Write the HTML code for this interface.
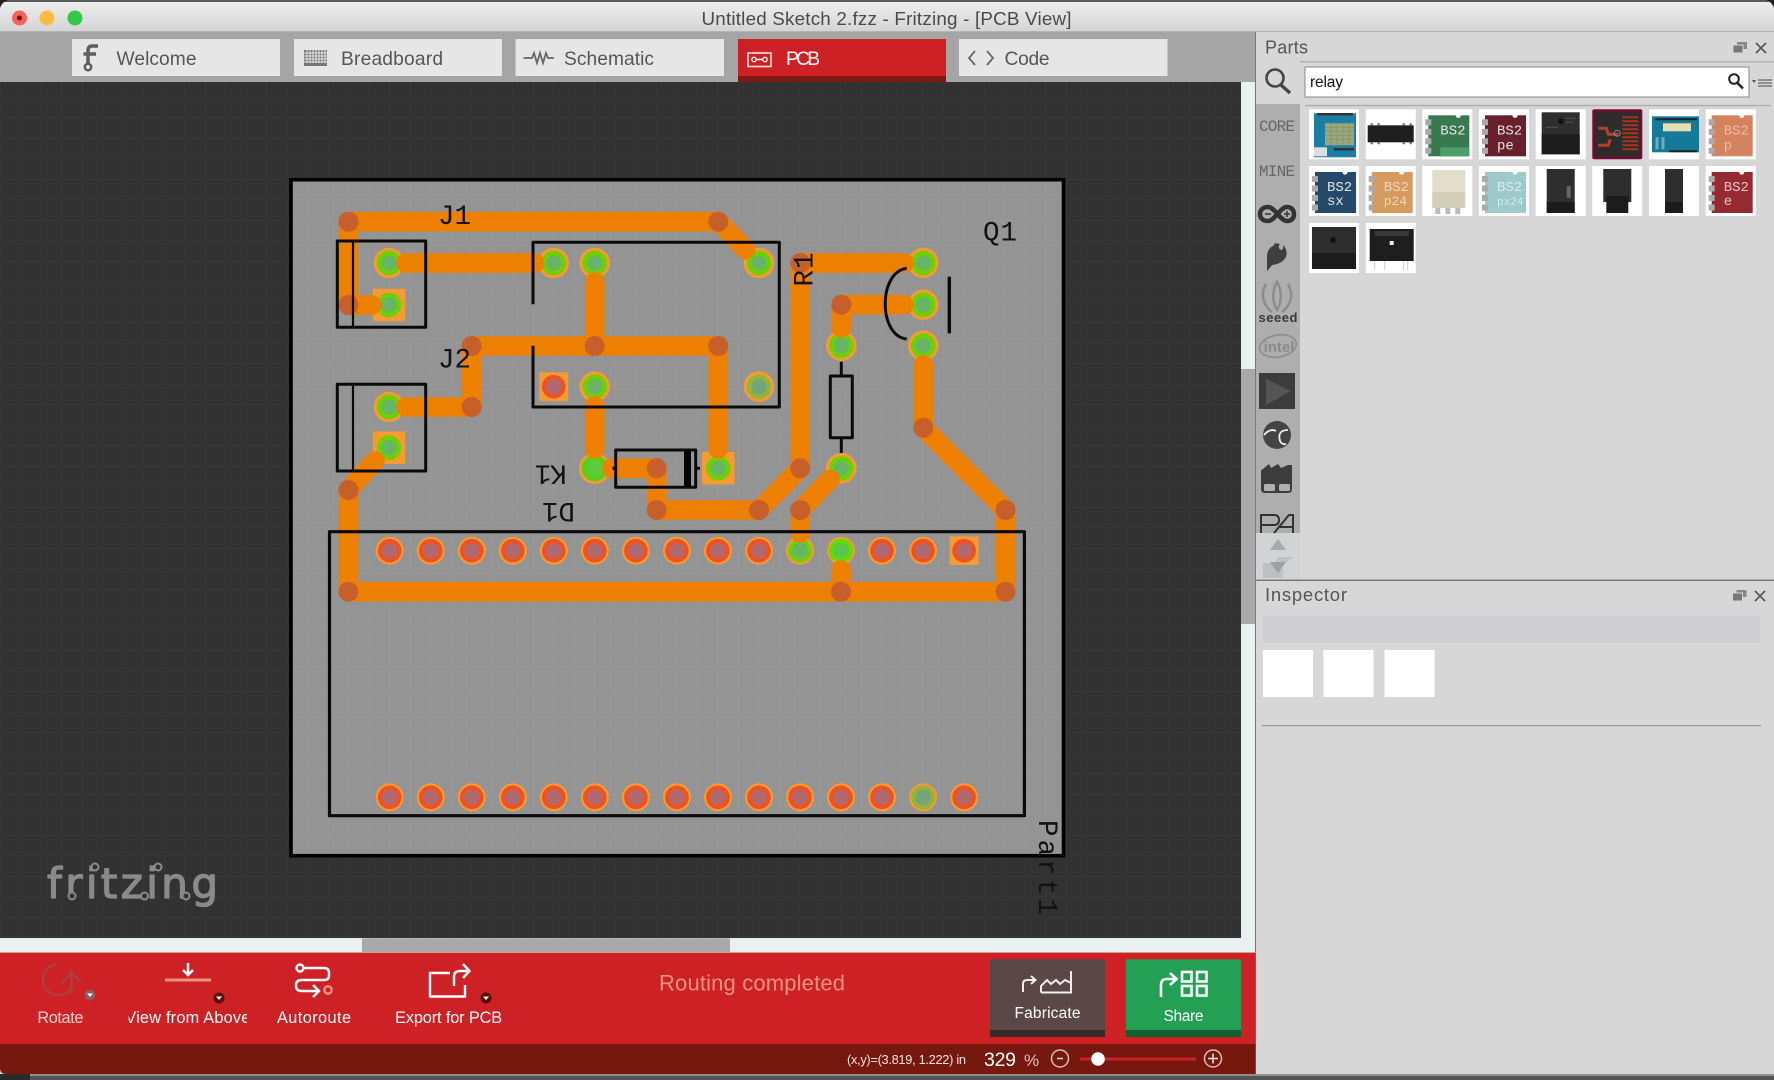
<!DOCTYPE html>
<html><head><meta charset="utf-8"><title>Untitled Sketch 2.fzz - Fritzing - [PCB View]</title>
<style>
html,body{margin:0;padding:0;background:#2a2a2a;width:1774px;height:1080px;overflow:hidden}
svg{display:block;position:absolute;left:0;top:0}
text{font-family:"Liberation Sans",sans-serif}
.silk text{font-family:"Liberation Mono",monospace}
.bs{font-family:"Liberation Mono",monospace;font-size:14px}
</style></head><body>
<svg width="1774" height="1080" viewBox="0 0 1774 1080" xmlns="http://www.w3.org/2000/svg">
<defs>
<linearGradient id="tb" x1="0" y1="0" x2="0" y2="1"><stop offset="0" stop-color="#efefef"/><stop offset="1" stop-color="#d4d4d4"/></linearGradient>
<pattern id="gd" width="20.5" height="20.5" patternUnits="userSpaceOnUse" y="15"><rect width="20.5" height="20.5" fill="#323232"/><path d="M0 0H20.5M0 0V20.5" stroke="#393b3c" stroke-width="1"/></pattern>
<pattern id="gb" width="20.5" height="20.5" patternUnits="userSpaceOnUse" y="15"><rect width="20.5" height="20.5" fill="#939493"/><path d="M0 0H20.5M0 0V20.5" stroke="#999a99" stroke-width="1"/></pattern>
<g id="g"><circle r="15.3" fill="#f59b32"/><circle r="12.2" fill="#6fd000"/><circle r="7.6" fill="#66b566"/></g>
<g id="gs"><rect x="-16.3" y="-16.3" width="32.6" height="32.6" fill="#f59b32"/><circle r="12.2" fill="#6fd000"/><circle r="7.6" fill="#66b566"/></g>
<g id="gb2"><circle r="15.8" fill="#f59b32"/><circle r="13" fill="#58d018"/><circle r="8.5" fill="#5ccc3c"/></g>
<g id="ol"><circle r="15.3" fill="#f59b32"/><circle r="12.2" fill="#93b33a"/><circle r="7.6" fill="#74a57a"/></g>
<g id="r"><circle r="14" fill="#f59b32"/><circle r="11.8" fill="#f2511f"/><circle r="7.8" fill="#b0696e"/></g>
<g id="rs"><rect x="-14.5" y="-14.3" width="29" height="28.6" fill="#f59b32"/><circle r="11.8" fill="#f2511f"/><circle r="7.8" fill="#b0696e"/></g>
<g id="g2"><circle r="14" fill="#f59b32"/><circle r="11.8" fill="#6fd000"/><circle r="7.8" fill="#66b566"/></g>
<g id="g3"><circle r="14" fill="#f59b32"/><circle r="11.8" fill="#5de000"/><circle r="7.8" fill="#5cc64a"/></g>
<g id="o2"><circle r="14" fill="#f59b32"/><circle r="11.8" fill="#93b33a"/><circle r="7.8" fill="#74a57a"/></g>
<circle id="v" r="10" fill="#c65f2a"/>
<g id="pn"><rect x="3" y="10" width="6" height="6" fill="#aaa"/><rect x="3" y="19.5" width="6" height="6" fill="#aaa"/><rect x="3" y="29" width="6" height="6" fill="#aaa"/><rect x="3" y="38.500" width="6" height="6" fill="#aaa"/><circle cx="36" cy="6" r="2.6" fill="#fff"/></g>
<g id="rl"><rect x="6" y="3" width="38" height="42" fill="#2e2e2e"/><rect x="6" y="25" width="38" height="20" fill="#1c1c1c"/><circle cx="25" cy="12" r="3" fill="#111"/><path d="M30 9h10M30 13h8M10 18h12" stroke="#555"/></g>
<g id="udk"><rect x="4" y="0" width="10" height="7" fill="#888"/><rect x="0" y="3" width="10" height="8" fill="#777" stroke="#d7d7d7" stroke-width="1"/></g>
</defs>

<!-- base -->
<rect width="1774" height="1080" fill="#d7d7d7"/>
<rect x="0" y="1074" width="1774" height="6" fill="#555"/>
<rect x="30" y="1074" width="1744" height="2" fill="#8f8f8f"/>
<rect x="0" y="1074" width="30" height="6" fill="#2a2a2a"/>

<!-- title bar -->
<rect x="0" y="0" width="1774" height="32" fill="url(#tb)"/>
<rect x="0" y="0" width="1774" height="2" fill="#5a5a5a"/>
<path d="M0 0H8Q2 2 0 8Z" fill="#222"/><path d="M1774 0H1766Q1772 2 1774 8Z" fill="#222"/>
<rect x="0" y="31" width="1774" height="1" fill="#b4b4b4"/>
<circle cx="19.500" cy="18" r="7.500" fill="#fc605c"/><circle cx="19.500" cy="18" r="2.500" fill="#6b1512"/>
<circle cx="47" cy="18" r="7.500" fill="#fdbc40"/>
<circle cx="75" cy="18" r="7.500" fill="#34c84a"/>
<text x="701.500" y="25" font-size="18.800" fill="#4a4a4a" textLength="370">Untitled Sketch 2.fzz - Fritzing - [PCB View]</text>

<!-- tab toolbar -->
<rect x="0" y="32" width="1255" height="50" fill="#a5a5a5"/>
<rect x="72" y="39" width="208" height="37" fill="#e6e6e6"/>
<rect x="294" y="39" width="208" height="37" fill="#e6e6e6"/>
<rect x="515.500" y="39" width="208.500" height="37" fill="#e6e6e6"/>
<rect x="738" y="39" width="208" height="37" fill="#cd2126"/>
<rect x="738" y="76" width="208" height="6" fill="#7d1a12"/>
<rect x="959" y="39" width="208.500" height="37" fill="#e6e6e6"/>
<!-- tab icons -->
<g fill="none" stroke="#5d5d5d" stroke-width="3.500"><path d="M98 46H92Q88 46 88 51V63"/><path d="M83.500 54H96"/><circle cx="88" cy="67" r="3.200" stroke-width="2.500"/></g>
<rect x="304" y="50" width="23" height="16" fill="#777"/><path d="M304 53H327M304 56H327M304 59H327M304 62H327M307 50V63M310 50V63M313 50V63M316 50V63M319 50V63M322 50V63M325 50V63" stroke="#e6e6e6" stroke-width="1"/>
<path d="M523.500 58H532L534 53L537 63L540 53L543 63L546 53L548 58H554" fill="none" stroke="#666" stroke-width="1.800"/>
<rect x="748" y="53" width="23" height="13.500" fill="none" stroke="#fff" stroke-width="1.600" opacity=".85"/><path d="M753 59.500H766" stroke="#fff" stroke-width="1.500"/><circle cx="754" cy="59.500" r="2.200" fill="#cd2126" stroke="#fff" stroke-width="1.300"/><circle cx="765" cy="59.500" r="2.200" fill="#cd2126" stroke="#fff" stroke-width="1.300"/>
<path d="M975 51L969 58L975 65M987 51L993 58L987 65" fill="none" stroke="#666" stroke-width="1.800"/>
<g font-size="19.200" fill="#565656">
<text x="116.500" y="65" textLength="80">Welcome</text>
<text x="341" y="65" textLength="102">Breadboard</text>
<text x="564" y="65" textLength="90">Schematic</text>
<text x="1004.500" y="65" textLength="45">Code</text>
</g>
<text x="786" y="65" font-size="19.200" fill="#fff" textLength="34">PCB</text>

<!-- canvas -->
<rect x="0" y="82" width="1241" height="856" fill="url(#gd)"/>
<!-- vertical scrollbar -->
<rect x="1241" y="82" width="14" height="870" fill="#e8f0f2"/>
<rect x="1241" y="369" width="14" height="255" fill="#a9a9a9"/>
<!-- horizontal scrollbar -->
<rect x="0" y="938.300" width="1241" height="14" fill="#e8f0f2"/>
<rect x="362" y="938.300" width="368" height="14" fill="#a9a9a9"/>
<rect x="1255" y="32" width="1" height="1042" fill="#777"/>

<!-- fritzing logo -->
<text x="47" y="898" font-size="42" fill="#8a8a8a" stroke="#8a8a8a" stroke-width="1.300" stroke-linejoin="round" textLength="171" style="font-family:'DejaVu Sans',sans-serif">fritzing</text>
<g fill="#323232" stroke="#8a8a8a" stroke-width="2"><circle cx="72" cy="896" r="3.500"/><circle cx="144.500" cy="896" r="3.500"/><circle cx="186" cy="896" r="3.500"/><circle cx="95" cy="867" r="3.500"/><circle cx="158" cy="867" r="3.500"/></g>

<!-- board -->
<rect x="291" y="179.700" width="772.500" height="676" fill="url(#gb)" stroke="#000" stroke-width="3.600"/>

<!-- pads -->
<use href="#g" x="389" y="263"/><use href="#gs" x="389" y="305"/>
<use href="#g" x="553.700" y="263"/><use href="#g" x="594.700" y="263"/><use href="#g" x="759" y="263"/>
<use href="#rs" x="553.700" y="386.700"/><use href="#g" x="594.700" y="386.700"/><use href="#ol" x="759" y="386.700"/>
<use href="#g" x="389" y="407"/><use href="#gs" x="389" y="447.700"/>
<use href="#gb2" x="594.700" y="468.300"/><use href="#gs" x="718.300" y="468.300"/>
<use href="#g" x="841.300" y="345.700"/><use href="#g" x="841.300" y="468.300"/>
<use href="#g" x="923.300" y="263"/><use href="#g" x="923.300" y="304.700"/><use href="#g" x="923.300" y="345.700"/>
<g>
<use href="#r" x="389.700" y="550.700"/><use href="#r" x="430.700" y="550.700"/><use href="#r" x="471.800" y="550.700"/><use href="#r" x="512.800" y="550.700"/><use href="#r" x="553.800" y="550.700"/><use href="#r" x="594.800" y="550.700"/><use href="#r" x="635.900" y="550.700"/><use href="#r" x="676.900" y="550.700"/><use href="#r" x="717.900" y="550.700"/><use href="#r" x="759" y="550.700"/><use href="#g2" x="800" y="550.700"/><use href="#g3" x="841" y="550.700"/><use href="#r" x="882" y="550.700"/><use href="#r" x="923.100" y="550.700"/><use href="#rs" x="964.100" y="550.700"/>
<use href="#r" x="389.700" y="797.300"/><use href="#r" x="430.700" y="797.300"/><use href="#r" x="471.800" y="797.300"/><use href="#r" x="512.800" y="797.300"/><use href="#r" x="553.800" y="797.300"/><use href="#r" x="594.800" y="797.300"/><use href="#r" x="635.900" y="797.300"/><use href="#r" x="676.900" y="797.300"/><use href="#r" x="717.900" y="797.300"/><use href="#r" x="759" y="797.300"/><use href="#r" x="800" y="797.300"/><use href="#r" x="841" y="797.300"/><use href="#r" x="882" y="797.300"/><use href="#o2" x="923.100" y="797.300"/><use href="#r" x="964.100" y="797.300"/>
</g>

<!-- traces -->
<g fill="none" stroke="#ee8000" stroke-width="19.600" stroke-linecap="round" stroke-linejoin="round">
<path d="M745.600 249.600L718.300 221.700H348.500V305H372"/>
<path d="M406 263H534.700"/>
<path d="M594.700 282V346"/>
<path d="M718.300 449V346H471.700V407H406"/>
<path d="M594.700 406V449"/>
<path d="M612 468.300H656.700V510H759L800.300 468.300V263H904"/>
<path d="M375 461L348.500 490V591.700H1005.500V510L923.300 427.700V365"/>
<path d="M841.300 328V304.700H904"/>
<path d="M830 479.500L800.300 510V533"/>
<path d="M841 570V591.700"/>
</g>
<!-- vias -->
<use href="#v" x="348.500" y="221.700"/><use href="#v" x="718.300" y="221.700"/><use href="#v" x="348.500" y="305"/><use href="#v" x="471.700" y="346"/><use href="#v" x="594.700" y="346"/><use href="#v" x="718.300" y="346"/><use href="#v" x="471.700" y="407"/><use href="#v" x="348.500" y="490"/><use href="#v" x="656.700" y="468.300"/><use href="#v" x="656.700" y="510"/><use href="#v" x="759" y="510"/><use href="#v" x="800.300" y="468.300"/><use href="#v" x="800.300" y="510"/><use href="#v" x="800.300" y="263"/><use href="#v" x="841.300" y="304.700"/><use href="#v" x="923.300" y="427.700"/><use href="#v" x="1005.500" y="510"/><use href="#v" x="348.500" y="591.700"/><use href="#v" x="841" y="591.700"/><use href="#v" x="1005.500" y="591.700"/>

<!-- silkscreen -->
<g fill="none" stroke="#0a0a0a" stroke-width="3" stroke-linejoin="round">
<rect x="337.300" y="241" width="88.400" height="86.300"/><path d="M353 241V327" stroke-width="2.200"/>
<rect x="337.300" y="384.300" width="88.400" height="86.700"/><path d="M353 384V471" stroke-width="2.200"/>
<path d="M533 304.300V242.300H779.300V407H533V345.700"/>
<rect x="615.700" y="450" width="80" height="37.300"/>
<rect x="684" y="450" width="7" height="37.300" fill="#000" stroke="none"/>
<path d="M612.500 468.300H615.700M695.700 468.300H700"/>
<rect x="830.300" y="376" width="22" height="61.700"/><path d="M841.300 361.700V376M841.300 437.700V453"/>
<path d="M906.700 268.300C878 272 878 336 906.700 339"/>
<path d="M949.300 276.700V333.300" stroke-width="3.400"/>
<rect x="329.500" y="531.700" width="694.900" height="284" stroke-width="3.200"/>
</g>
<g class="silk" fill="#111" font-size="27.500">
<text x="438" y="224" textLength="33">J1</text>
<text x="438" y="367.500" textLength="33">J2</text>
<text x="983" y="240.500" textLength="34">Q1</text>
<text transform="translate(812.500,286.500) rotate(-90)" textLength="34">R1</text>
<text transform="translate(566.700,465.500) rotate(180)" textLength="32">K1</text>
<text transform="translate(575,503) rotate(180)" textLength="33">D1</text>
<text transform="translate(1039,820) rotate(90)" textLength="95">Part1</text>
</g>

<!-- bottom toolbar -->
<rect x="0" y="952.700" width="1255.500" height="91.300" fill="#cd2126"/>
<path d="M0 1044H1255.500V1074H6Q0 1074 0 1068Z" fill="#76180e"/>
<rect x="0" y="952" width="1255.500" height="1" fill="#d99a98"/>

<!-- rotate -->
<g fill="none" stroke="#a94044" stroke-width="2.200"><path d="M57 964A15.500 15.500 0 1 0 72 987"/><path d="M62 984L71.500 972L81 983M71.500 972V994"/></g>
<circle cx="90" cy="995" r="5.500" fill="#8f5a5c"/><path d="M87 993.500H93L90 997Z" fill="#fff"/>
<text x="60.400" y="1023" text-anchor="middle" font-size="16.300" fill="#f6d4d2" textLength="46">Rotate</text>
<!-- view from above -->
<path d="M165 980H211" stroke="#ee9280" stroke-width="3"/>
<path d="M188 963V975M183 970L188 975L193 970" fill="none" stroke="#fff" stroke-width="2.500"/>
<circle cx="219" cy="998" r="5.500" fill="#5c0f0a"/><path d="M216 996.500H222L219 1000Z" fill="#fff"/>
<svg x="128.600" y="1000" width="118.400" height="32"><text x="59.200" y="23" text-anchor="middle" font-size="16.300" fill="#fff" textLength="125">View from Above</text></svg>
<!-- autoroute -->
<g fill="none" stroke="#fff" stroke-width="2.400"><circle cx="300" cy="968" r="3.500"/><path d="M304 968H324Q329 968 329 973V976Q329 980 324 980H302Q296 980 296 985V986Q296 991 302 991H318"/><path d="M313 985L319 991L313 997"/></g>
<circle cx="328" cy="990" r="3.700" fill="none" stroke="#ee9280" stroke-width="2.400"/>
<text x="314" y="1023" text-anchor="middle" font-size="16.300" fill="#fff" textLength="74">Autoroute</text>
<!-- export -->
<g fill="none" stroke="#fff" stroke-width="2.400"><path d="M450 973H430V996.500H465V985"/><path d="M454 986V977Q454 971 460 971H468"/><path d="M463 964L469.500 971L463 978"/></g>
<circle cx="486" cy="998" r="5.500" fill="#5c0f0a"/><path d="M483 996.500H489L486 1000Z" fill="#fff"/>
<text x="448.600" y="1023" text-anchor="middle" font-size="16.300" fill="#fff" textLength="107">Export for PCB</text>

<text x="659" y="990.500" font-size="22" fill="#ee9280" textLength="186">Routing completed</text>

<!-- Fabricate -->
<rect x="990" y="959.300" width="115" height="70.700" fill="#5a4746"/><rect x="990" y="1030" width="115" height="7" fill="#372a28"/>
<g fill="none" stroke="#efefef" stroke-width="2"><path d="M1023 992V984Q1023 980 1027 980H1035M1031 976L1035.500 980L1031 984" /><path d="M1041 992.500V986L1047 980L1051 984L1056 980L1060 984L1065 980L1071 983V971M1071 971V992.500H1041" /></g>
<text x="1047.500" y="1018" text-anchor="middle" font-size="15.500" fill="#fff" textLength="66">Fabricate</text>
<!-- Share -->
<rect x="1126" y="959.300" width="115" height="70.700" fill="#24a054"/><rect x="1126" y="1030" width="115" height="7" fill="#126030"/>
<g fill="none" stroke="#fff" stroke-width="2.600"><path d="M1161 997V985Q1161 979 1167 979H1176M1170 973L1176.500 979L1170 985"/><rect x="1182" y="972" width="9.500" height="9.500"/><rect x="1197" y="972" width="9.500" height="9.500"/><rect x="1182" y="986" width="9.500" height="9.500"/><rect x="1197" y="986" width="9.500" height="9.500"/></g>
<text x="1183.500" y="1021" text-anchor="middle" font-size="15.500" fill="#fff" textLength="40">Share</text>

<!-- status -->
<text x="847" y="1064" font-size="12.800" fill="#f3e3e0" textLength="119">(x,y)=(3.819, 1.222) in</text>
<text x="984" y="1066" font-size="19.500" fill="#fff" textLength="32">329</text>
<text x="1024" y="1066" font-size="17" fill="#d8c4c0">%</text>
<circle cx="1060" cy="1058.500" r="8.500" fill="none" stroke="#d9bdb8" stroke-width="1.500"/><path d="M1057 1058.500H1063" stroke="#e8d8d4" stroke-width="1.500"/>
<rect x="1080" y="1057.500" width="116" height="3" fill="#cd2126"/>
<circle cx="1098" cy="1059" r="6.800" fill="#fff"/>
<circle cx="1213" cy="1058.500" r="8.500" fill="none" stroke="#d9bdb8" stroke-width="1.500"/><path d="M1208 1058.500H1218M1213 1053.500V1063.500" stroke="#eee" stroke-width="1.500"/>

<!-- parts panel -->
<text x="1265" y="53.500" font-size="18" fill="#555" textLength="43">Parts</text>
<rect x="1300" y="61" width="474" height="1.500" fill="#b2b2b2"/>
<use href="#udk" x="1733" y="42"/>
<path d="M1756 43L1766 53M1766 43L1756 53" stroke="#555" stroke-width="1.600"/>
<circle cx="1275" cy="78" r="8.500" fill="none" stroke="#444" stroke-width="2.600"/><path d="M1281 85L1290 93" stroke="#444" stroke-width="3.400"/>
<rect x="1305" y="67" width="444" height="30" fill="#fff" stroke="#8a8a8a" stroke-width="1"/>
<text x="1310" y="87" font-size="15.500" fill="#111" textLength="33">relay</text>
<circle cx="1734" cy="79" r="4.800" fill="none" stroke="#222" stroke-width="2"/><path d="M1737.500 83L1743 88.500" stroke="#222" stroke-width="2.500"/>
<path d="M1752 80H1756L1754 83Z" fill="#555"/><path d="M1758 80H1772M1758 83H1772M1758 86H1772" stroke="#666" stroke-width="1.300"/>
<rect x="1305" y="104.800" width="466" height="1.500" fill="#b0b0b0"/>

<!-- sidebar -->
<rect x="1256" y="104" width="44" height="429" fill="#aeaeae"/>
<rect x="1256" y="533" width="44" height="45" fill="#d0d4d4"/>
<text x="1277" y="131" text-anchor="middle" font-size="16" fill="#666" textLength="36" style="font-family:'Liberation Mono',monospace">CORE</text>
<text x="1277" y="176" text-anchor="middle" font-size="16" fill="#666" textLength="36" style="font-family:'Liberation Mono',monospace">MINE</text>
<path d="M1268 207C1262 207 1260 211 1260 214C1260 218 1263 221 1268 221C1275 221 1280 207 1287 207C1292 207 1294 211 1294 214C1294 218 1292 221 1287 221C1280 221 1275 207 1268 207Z" fill="none" stroke="#333" stroke-width="4.500"/>
<path d="M1284 214H1290M1287 211V217M1265 214H1271" stroke="#333" stroke-width="1.500"/>
<path d="M1267 271V255Q1268 248 1273 246Q1276 243 1274 243L1280 244Q1277 248 1281 250Q1284 249 1283 245Q1288 250 1286 257Q1282 264 1272 265Q1270 268 1267 271Z" fill="#3f3f3f"/>
<g fill="none" stroke="#8c8c8c" stroke-width="2.500"><path d="M1277 282C1272 290 1272 302 1277 310C1282 302 1282 290 1277 282Z"/><path d="M1266 284C1260 294 1263 305 1272 312"/><path d="M1288 284C1294 294 1291 305 1282 312"/></g>
<text x="1278" y="322" text-anchor="middle" font-size="13" font-weight="bold" fill="#3a3a3a" textLength="39">seeed</text>
<ellipse cx="1278" cy="346" rx="18.500" ry="11" fill="none" stroke="#8f8f8f" stroke-width="1.800" transform="rotate(-10 1278 346)"/>
<text x="1279" y="352" text-anchor="middle" font-size="15" font-weight="bold" fill="#8a8a8a">intel</text>
<rect x="1259" y="373" width="36" height="36" fill="#3c3c3c"/><path d="M1266 379L1291 391L1266 405Z" fill="#555"/>
<circle cx="1277" cy="435" r="14" fill="#444"/><path d="M1264 435Q1270 428 1276 431M1288 430Q1277 430 1280 441Q1282 445 1286 444" fill="none" stroke="#eee" stroke-width="1.800"/>
<path d="M1261 472Q1261 469 1263 469L1269 464L1271 468L1278 464L1281 468L1288 465L1292 465V489Q1292 493 1288 493H1265Q1261 493 1261 489Z" fill="#3d3d3d"/>
<rect x="1264" y="484" width="11" height="7" rx="1.500" fill="#b0b0b0"/><rect x="1279" y="484" width="11" height="7" rx="1.500" fill="#b0b0b0"/>
<g fill="none" stroke="#333" stroke-width="2"><path d="M1261 533V515H1274Q1279 515 1279 520Q1279 525 1274 525H1261"/><path d="M1274 533L1289 515H1293V533M1279 527H1293"/></g>
<path d="M1270 550L1278 539L1286 550Z" fill="#a9a9a9"/>
<path d="M1263 578V563H1275L1278 557H1293L1283 565V578Z" fill="#b5b9b9" opacity=".7"/>
<path d="M1270 562L1278 573L1286 562Z" fill="#a0a0a0"/>

<!-- tiles -->
<g>
<!-- row 1 -->
<g transform="translate(1309,109.300)"><rect width="50" height="50" fill="#fff"/><rect x="5" y="4" width="42" height="44" fill="#1c7ea3"/><rect x="16" y="14" width="29" height="22" fill="#9aa87c"/><path d="M16 18h29M16 22h29M16 26h29M16 30h29M22 14v22M28 14v22M34 14v22M40 14v22" stroke="#87966c" stroke-width="1"/><rect x="5" y="38" width="13" height="9" fill="#ddd"/><path d="M25 40h20M8 5h36" stroke="#333" stroke-width="2.500"/></g>
<g transform="translate(1365.700,109.300)"><rect width="50" height="50" fill="#fff"/><rect x="2" y="16" width="46" height="17" fill="#1e1e1e"/><path d="M6 14v2M13 14v2M38 14v2M45 14v2M6 33v2M13 33v2M38 33v2M45 33v2" stroke="#777" stroke-width="2.500"/></g>
<g transform="translate(1422.300,109.300)"><rect width="50" height="50" fill="#fff"/><rect x="6" y="6" width="41" height="41" fill="#39794f"/><rect x="18" y="38" width="29" height="9" fill="#4aa067"/><use href="#pn"/><text class="bs" x="18" y="25" fill="#e5e5e5">BS2</text></g>
<g transform="translate(1479,109.300)"><rect width="50" height="50" fill="#fff"/><rect x="6" y="6" width="41" height="41" fill="#66202e"/><use href="#pn"/><text class="bs" x="18" y="25" fill="#e5e5e5">BS2</text><text class="bs" x="18" y="40" fill="#e5e5e5">pe</text></g>
<g transform="translate(1535.700,109.300)"><rect width="50" height="50" fill="#fff"/><use href="#rl"/></g>
<g transform="translate(1592.300,109.300)"><rect width="50" height="50" rx="2" fill="#6a0f33"/><rect x="3" y="3" width="44" height="44" fill="#2c2c2c"/><path d="M30 8h16M30 12h16M30 16h16M30 20h16M30 24h16M30 28h16M30 32h16M30 36h16M30 40h16" stroke="#a8341e" stroke-width="2"/><path d="M6 19h8l2 6h10M6 36h10l2-6" stroke="#b6402a" stroke-width="3" fill="none"/><circle cx="25" cy="24" r="3" fill="none" stroke="#888"/></g>
<g transform="translate(1649,109.300)"><rect width="50" height="50" fill="#fff"/><rect x="3" y="7" width="47" height="36" fill="#157a99"/><rect x="14" y="14" width="28" height="8" fill="#e8dcb0"/><path d="M6 10h42M20 42h28" stroke="#222" stroke-width="2"/><path d="M8 28v12M14 28v12" stroke="#7ab" stroke-width="3"/></g>
<g transform="translate(1705.700,109.300)"><rect width="50" height="50" fill="#fff"/><rect x="6" y="6" width="41" height="41" fill="#d5835e"/><use href="#pn"/><text class="bs" x="18" y="25" fill="#eebba5">BS2</text><text class="bs" x="18" y="40" fill="#eebba5">p</text></g>
<!-- row 2 -->
<g transform="translate(1309,166)"><rect width="50" height="50" fill="#fff"/><rect x="6" y="6" width="41" height="41" fill="#24496b"/><use href="#pn"/><text class="bs" x="18" y="25" fill="#e5e5e5">BS2</text><text class="bs" x="18" y="39" fill="#e5e5e5">sx</text></g>
<g transform="translate(1365.700,166)"><rect width="50" height="50" fill="#fff"/><rect x="6" y="6" width="41" height="41" fill="#d69a5e"/><use href="#pn"/><text class="bs" x="18" y="25" fill="#f0d8b8">BS2</text><text class="bs" x="18" y="39" fill="#f0d8b8" style="font-size:13px">p24</text></g>
<g transform="translate(1422.300,166)"><rect width="50" height="50" fill="#fff"/><rect x="10" y="4" width="33" height="38" fill="#e3ddcc"/><rect x="10" y="26" width="33" height="16" fill="#d3ceb8"/><rect x="13" y="42" width="5" height="6" fill="#bbb"/><rect x="23" y="42" width="5" height="6" fill="#bbb"/><rect x="33" y="42" width="5" height="6" fill="#bbb"/></g>
<g transform="translate(1479,166)"><rect width="50" height="50" fill="#fff"/><rect x="6" y="6" width="41" height="41" fill="#9cc9c9"/><use href="#pn"/><text class="bs" x="18" y="25" fill="#d8ecec">BS2</text><text class="bs" x="18" y="39" fill="#d8ecec" style="font-size:11px">px24</text></g>
<g transform="translate(1535.700,166)"><rect width="50" height="50" fill="#fff"/><rect x="11" y="3" width="28" height="44" fill="#2e2e2e"/><rect x="11" y="36" width="28" height="11" fill="#1c1c1c"/><rect x="31" y="20" width="4" height="12" fill="#666"/></g>
<g transform="translate(1592.300,166)"><rect width="50" height="50" fill="#fff"/><rect x="11" y="3" width="28" height="33" fill="#2e2e2e"/><rect x="14" y="30" width="22" height="17" fill="#1c1c1c"/></g>
<g transform="translate(1649,166)"><rect width="50" height="50" fill="#fff"/><rect x="16" y="3" width="18" height="44" fill="#2e2e2e"/><rect x="16" y="36" width="18" height="11" fill="#1c1c1c"/></g>
<g transform="translate(1705.700,166)"><rect width="50" height="50" fill="#fff"/><rect x="6" y="6" width="41" height="41" fill="#962a30"/><use href="#pn"/><text class="bs" x="18" y="25" fill="#e8c4c4">BS2</text><text class="bs" x="18" y="39" fill="#e8c4c4">e</text></g>
<!-- row 3 -->
<g transform="translate(1309,223)"><rect width="50" height="50" fill="#fff"/><rect x="3" y="4" width="44" height="42" fill="#2e2e2e"/><rect x="3" y="30" width="44" height="16" fill="#1c1c1c"/><circle cx="24" cy="17" r="3" fill="#111"/></g>
<g transform="translate(1365.700,223)"><rect width="50" height="50" fill="#fff"/><rect x="4" y="6" width="44" height="32" fill="#1e1e1e"/><rect x="9" y="8" width="34" height="5" fill="#3a3a3a"/><rect x="24" y="18" width="4" height="4" fill="#eee"/><path d="M9 38v9M19 38v9M38 38v9M42 38v9" stroke="#ccc" stroke-width="1"/></g>
</g>

<!-- inspector -->
<rect x="1256" y="579.500" width="518" height="1.500" fill="#777"/>
<text x="1265" y="601" font-size="18.500" fill="#555" textLength="82">Inspector</text>
<use href="#udk" x="1732.500" y="590"/>
<path d="M1755 591L1765 601M1765 591L1755 601" stroke="#555" stroke-width="1.600"/>
<rect x="1263" y="616" width="497" height="27" fill="#cfced3"/>
<rect x="1263" y="650" width="50" height="47" fill="#fff"/>
<rect x="1323.500" y="650" width="50" height="47" fill="#fff"/>
<rect x="1384.500" y="650" width="50" height="47" fill="#fff"/>
<rect x="1262" y="725" width="499" height="1.200" fill="#999"/>
</svg>
</body></html>
